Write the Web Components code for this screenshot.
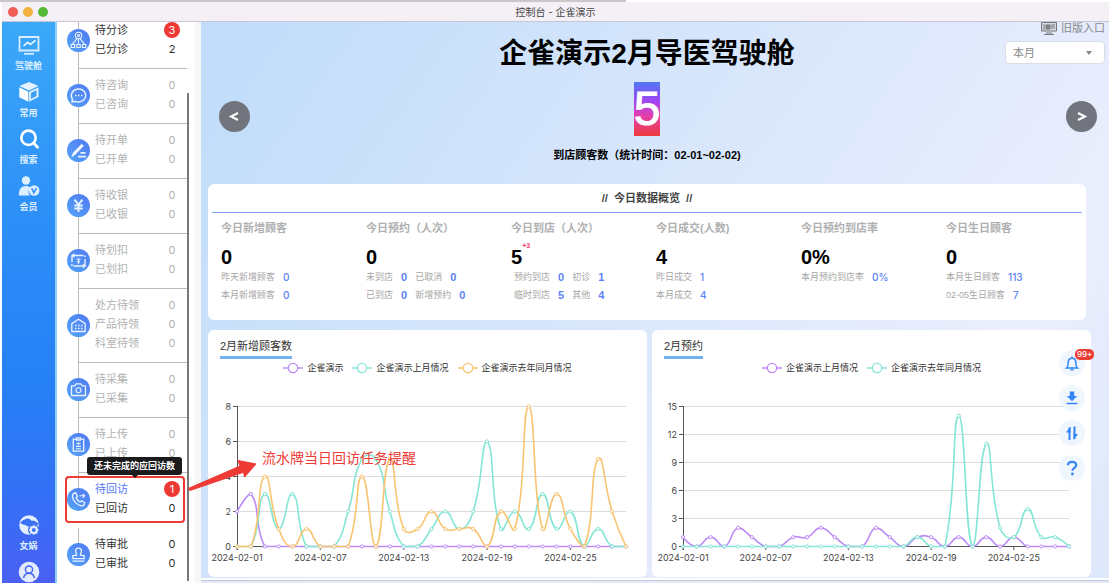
<!DOCTYPE html>
<html lang="zh-CN">
<head>
<meta charset="utf-8">
<title>控制台 - 企雀演示</title>
<style>
html,body{margin:0;height:100%;background:#fff}
body{font-family:"Liberation Sans","Noto Sans CJK SC",sans-serif;font-size:11px;line-height:16px;color:#333;overflow:hidden}
</style>
</head>
<body>
<cockpit-app></cockpit-app>
<script>
const define = (name, html, setup) => {
  const tpl = document.createElement('template');
  tpl.innerHTML = html;
  customElements.define(name, class extends HTMLElement {
    connectedCallback() {
      if (this.shadowRoot) return;
      this.attachShadow({mode: 'open'}).append(tpl.content.cloneNode(true));
      if (setup) setup(this, this.shadowRoot);
    }
  });
};

const RAIL_ICONS = {
  board: '<path d="M1.500 3h19v13.500h-19z" fill="none" stroke="#d8ecff" stroke-width="1.800"/><path d="M5.500 12l4-3.600 3 2 5-4" fill="none" stroke="#fff" stroke-width="1.500"/><path d="M6 19.800h10" stroke="#d8ecff" stroke-width="1.800"/>',
  cube: '<path d="M11 1l9.500 4-9.500 4.600L1.500 5z" fill="#e6f3ff"/><path d="M1.300 6.300l9 4.400v10L1.300 16.300z" fill="#fff"/><path d="M20.500 6.300l-9.400 4.400v10l9.400-4.600z" fill="#e0f0ff"/><path d="M13 11.800l5.500-2.600v5.800L13 18z" fill="#3f9df6"/>',
  search: '<circle cx="10.500" cy="9.800" r="7.200" fill="none" stroke="#fff" stroke-width="2.600"/><path d="M15.600 15l4 4.200" stroke="#fff" stroke-width="2.800" stroke-linecap="round"/>',
  member: '<circle cx="8" cy="5.500" r="4.200" fill="#dcefff"/><path d="M.8 20.500c0-6.500 2.600-9.600 7-9.600 2 0 3.600.6 4.700 1.800-2.500 2.300-2.600 5.400-.8 7.800z" fill="#dcefff"/><circle cx="16.200" cy="15.500" r="5.300" fill="#dcefff"/><path d="M13.800 13.200l2 4.600 2.600-4.600" fill="none" stroke="#2d8cf6" stroke-width="1.500"/>',
  globe: '<circle cx="11" cy="11" r="9.800" fill="#e4efff"/><path d="M5 6c2 .3 2.300-1.800 5-1.500s2.200 2.600 5 2.200 2.500 1.800 5.500 2.300l-1 2.500c-3-1.600-6-1-7.600 1.200-2.600.2-3-1.400-5-1.600S3.500 9.300 2 9" fill="#3a72f6"/><circle cx="15.800" cy="16" r="5.800" fill="#3a6ff6"/><circle cx="15.800" cy="16" r="2.900" fill="none" stroke="#e4efff" stroke-width="2.200"/><path d="M15.800 11.200v9.600M11 16h9.600M12.400 12.600l6.800 6.800M19.200 12.600l-6.800 6.800" stroke="#e4efff" stroke-width="1.500"/><circle cx="15.800" cy="16" r="1.900" fill="#3a6ff6"/>',
  user: '<circle cx="11" cy="11" r="10.300" fill="#e4ebff"/><circle cx="11" cy="8.500" r="3.600" fill="none" stroke="#4166f4" stroke-width="1.500"/><path d="M5.500 17c.8-3.200 2.800-4.700 5.500-4.700s4.700 1.500 5.500 4.700" fill="none" stroke="#4166f4" stroke-width="1.500"/>'
};

define('rail-item', `<style>
:host{display:block}
button{display:flex;flex-direction:column;align-items:center;gap:4px;width:100%;border:0;padding:0;background:none;color:#dceeff;font:700 9px/12px "Noto Sans CJK SC",sans-serif;cursor:pointer}
svg{display:block;width:22px;height:22px}
</style><button type="button"><svg viewBox="0 0 22 22" aria-hidden="true"></svg><slot></slot></button>`, (el, root) => {
  root.querySelector('svg').innerHTML = RAIL_ICONS[el.getAttribute('icon')];
  if (!el.textContent) root.querySelector('button').setAttribute('aria-label', '我的');
});

define('nav-rail', `<style>
:host{display:flex;flex-direction:column;justify-content:space-between;box-sizing:border-box;width:55px;padding-top:12px;background:linear-gradient(#3ba8f8,#2d8ff8 35%,#2680f6 65%,#3470f6 85%,#4a60f2);border-right:2px solid #90d2ff}
nav{display:flex;flex-direction:column;gap:9px}
</style>
<nav><rail-item icon="board">驾驶舱</rail-item><rail-item icon="cube">常用</rail-item><rail-item icon="search">搜索</rail-item><rail-item icon="member">会员</rail-item></nav>
<nav><rail-item icon="globe">女娲</rail-item><rail-item icon="user"></rail-item></nav>`);

const QUEUE_ICONS = {
  triage: '<circle cx="11.500" cy="6.500" r="3.200"/><circle cx="11.500" cy="6.500" r="1"/><path d="M11.500 9.800v5M10 9.600l-4.500 5.600M13 9.600l4.500 5.600M4.200 15.500h3.400v3H4.200zM9.800 15.500h3.400v3H9.800zM15.400 15.500h3.400v3h-3.400z"/>',
  chat: '<path d="M5 17.800l.5-2.600C2.500 10.500 5.800 5 11.700 5c4.300 0 7 3 7 6.400 0 3.600-3 6.600-7 6.600-1.500 0-2.500-.3-3.300-.6z" stroke-width="1.500"/><path d="M8 11.500h1.500M11 11.500h1.500M14 11.500h1.500" stroke-width="1.500"/>',
  pen: '<path d="M5.300 17.200l1-3 8.400-8.600 1.300 1.500-8.300 8.500z" fill="#fff"/><path d="M11 17.600h8M13.500 13.800h5" stroke-width="1.700"/>',
  yen: '<path d="M7.600 5.600l3.900 5 3.900-5M11.500 10.500v7.500M7.300 11.500h8.400M7.300 14.500h8.400" stroke-width="1.900"/>',
  deduct: '<path d="M5 13V6.500h11.500M18 10v7H6.500M5 15v2M18 8V6.500" stroke-width="1.400"/><path d="M7.500 4.800L5.200 6.500l2.300 1.700M15.800 15.200l2.400 1.700-2.400 1.800M11.500 9.500v5.500M9.500 10.200h4M10 12.600h3"/>',
  pharmacy: '<path d="M4.800 17.500V9.600l6.700-4.400 6.700 4.400v7.900zM8 11.500h1.500M11 11.500h1.500M14 11.500h1.500M8 14.500h1.500M11 14.500h1.500M14 14.500h1.500" stroke-width="1.300"/>',
  camera: '<path d="M4.500 7.800h3.300l1.400-2h4.600l1.400 2h3.300v9.700h-14z" stroke-width="1.300"/><circle cx="11.500" cy="12.200" r="2.500"/>',
  upload: '<path d="M6.300 6.200h10.400v12H6.300z" stroke-width="1.300"/><path d="M9.500 4.800h4v2.500h-4zM11.500 9v3M9.500 10.500h4M9 13.400h5M9 15.800h5"/>',
  call: '<path d="M6.500 5.600l2-1 2 3.600-1.400 1.500c.7 1.800 1.900 3.100 3.900 4.200l1.600-1.200 3.200 2.300-.9 2c-1 1.200-3 1.100-5.300-.2-3-1.700-5.200-4.500-6-7.500-.4-1.800 0-2.900.9-3.700z" stroke-width="1.300"/><path d="M12.500 7.800h5M15.700 5.800l2 2-2 2"/>',
  stamp: '<path d="M9.500 12.200c.4-1.800-.9-2.600-.9-4.200a2.900 2.900 0 0 1 5.800 0c0 1.600-1.300 2.400-.9 4.200l3.700.6v2.900H5.800v-2.900zM5.600 18.100h11.800" stroke-width="1.300"/>'
};

define('queue-item', `<style>
:host{display:flex;align-items:center;gap:5px;flex:none;position:relative;box-sizing:border-box;padding:7px 7px 9px 0;border-left:1px solid #bbb;border-bottom:1px solid #bbb;color:#b2b2b2}
:host([active]){color:#333}
:host([plain]){border-color:transparent;background:linear-gradient(#bbb 50%,transparent 50%) 0 0/1px 100% no-repeat border-box}
.ic{width:23px;height:23px;margin:1px 0 0 -12px;border-radius:50%;background:linear-gradient(45deg,#55a5f7,#5078f2);flex:none}
svg{display:block;width:23px;height:23px;fill:none;stroke:#eaf3ff;stroke-width:1.100}
.rows{flex:1}
.row{display:flex;justify-content:space-between;line-height:19px}
.n{width:16px;text-align:center;font-family:Inter,sans-serif}
.badge{height:16px;line-height:16px;margin-top:1px;border-radius:8px;background:#ee3833;color:#fff}
.hot{color:#5577f5}
</style><div class="ic"><svg viewBox="0 0 23 23" aria-hidden="true"></svg></div><div class="rows"></div><slot></slot>`, (el, root) => {
  root.querySelector('svg').innerHTML = QUEUE_ICONS[el.getAttribute('icon')];
  root.querySelector('.rows').innerHTML = el.getAttribute('rows').split(',').map((r, i) => {
    const [label, n, badge] = r.split(':');
    return `<div class="row"><span class="${el.hasAttribute('hot') && !i ? 'hot' : ''}">${label}</span><span class="n ${badge ? 'badge' : ''}">${n}</span></div>`;
  }).join('');
});

define('tip-bubble', `<style>
:host{position:absolute;left:8px;top:-16px;z-index:2;padding:0 7px;border-radius:3px;background:#1b1b1d;color:#fff;font:700 9px/18px "Noto Sans CJK SC",sans-serif;white-space:nowrap}
:host::after{content:"";position:absolute;left:50%;top:100%;margin-left:-3px;border:3px solid transparent;border-top-color:#1b1b1d;border-bottom:0}
</style><slot></slot>`);

define('queue-list', `<style>
:host{display:flex;flex-direction:column;box-sizing:border-box;width:144px;overflow:hidden;background:#fff;border-right:6px solid #f7f7f8;position:relative}
.list{display:flex;flex-direction:column;margin:-8px 8px 0 21px}
.bar{position:absolute;right:6px;top:71px;bottom:2px;width:2px;background:#777}
</style><div class="list">
<queue-item active icon="triage" rows="待分诊:3:b,已分诊:2"></queue-item>
<queue-item icon="chat" rows="待咨询:0,已咨询:0"></queue-item>
<queue-item icon="pen" rows="待开单:0,已开单:0"></queue-item>
<queue-item icon="yen" rows="待收银:0,已收银:0"></queue-item>
<queue-item icon="deduct" rows="待划扣:0,已划扣:0"></queue-item>
<queue-item icon="pharmacy" rows="处方待领:0,产品待领:0,科室待领:0"></queue-item>
<queue-item icon="camera" rows="待采集:0,已采集:0"></queue-item>
<queue-item icon="upload" rows="待上传:0,已上传:0"></queue-item>
<queue-item active hot plain icon="call" rows="待回访:1:b,已回访:0"><tip-bubble>还未完成的应回访数</tip-bubble></queue-item>
<queue-item active plain icon="stamp" rows="待审批:0,已审批:0"></queue-item>
</div><div class="bar"></div>`);

define('title-bar', `<style>
:host{display:flex;align-items:center;box-sizing:border-box;height:20px;padding:0 6px;background:#f5f0f6;border-bottom:1px solid #c6c6d6}
.dots{display:flex;gap:5px;flex:1}
i{width:10px;height:10px;border-radius:50%}
span{font:10px/16px Inter,"Noto Sans CJK SC",sans-serif;color:#444}
.end{flex:1}
</style><div class="dots"><i style="background:#ee5d56"></i><i style="background:#f3b13e"></i><i style="background:#56b938"></i></div><span><slot></slot></span><div class="end"></div>`);

define('metric-cell', `<style>
:host{display:block;padding:7px 0 16px 9px;white-space:nowrap;color:#a6a6a6}
h3{margin:0 0 10px;font-size:11px;line-height:16px;font-weight:700;color:#b0b0b0}
.v{display:flex;align-items:flex-start;font-size:20px;line-height:22px;font-weight:600;color:#000;font-family:"Liberation Sans",sans-serif}
sup{font-size:7px;line-height:8px;margin-top:-4px;color:#f0406c;font-weight:600}
.r{display:flex;gap:8px;font-size:9px;line-height:18px}
:host([indent]) .r{padding-left:3px}
b{font:500 10px/18px Inter,sans-serif;color:#5b83f6}
:host([pairs]) b{font:600 11px/18px "Liberation Sans",sans-serif}
</style><h3></h3><div class="v"></div>`, (el, root) => {
  root.querySelector('h3').textContent = el.getAttribute('label');
  const sup = el.getAttribute('delta');
  root.querySelector('.v').innerHTML = el.getAttribute('value') + (sup ? `<sup>${sup}</sup>` : '');
  for (const line of el.getAttribute('rows').split(';')) {
    const d = document.createElement('div');
    d.className = 'r';
    d.innerHTML = line.split(',').map(p => { const [a, b] = p.split(':'); return `<span>${a}</span><b>${b}</b>`; }).join('');
    root.append(d);
  }
});

define('overview-card', `<style>
:host{display:block;background:#fff;border-radius:6px;padding:0 4px}
h2{margin:0;text-align:center;font-size:11px;line-height:28px;font-weight:700;color:#444;border-bottom:1px solid #7ea2fa;white-space:pre}
.g{display:grid;grid-template-columns:repeat(6,1fr)}
</style><h2>//  今日数据概览  //</h2><div class="g">
<metric-cell label="今日新增顾客" value="0" rows="昨天新增顾客:0;本月新增顾客:0"></metric-cell>
<metric-cell pairs label="今日预约（人次）" value="0" rows="未到店:0,已取消:0;已到店:0,新增预约:0"></metric-cell>
<metric-cell pairs indent label="今日到店（人次）" value="5" delta="+3" rows="预约到店:0,初诊:1;临时到店:5,其他:4"></metric-cell>
<metric-cell label="今日成交(人数)" value="4" rows="昨日成交:1;本月成交:4"></metric-cell>
<metric-cell label="今日预约到店率" value="0%" rows="本月预约到店率:0%"></metric-cell>
<metric-cell label="今日生日顾客" value="0" rows="本月生日顾客:113;02-05生日顾客:7"></metric-cell>
</div>`);

/* Smoothed line; the control points stay inside the series' own bounding box. */
function smoothPath(pts) {
  const ys = pts.map(p => p[1]), lo = Math.min(...ys), hi = Math.max(...ys);
  const clamp = p => [p[0], Math.max(lo, Math.min(hi, p[1]))];
  let d = `M${pts[0]}`, cp0 = pts[0];
  for (let i = 1; i < pts.length; i++) {
    const p = pts[i], a = pts[i - 1], b = pts[i + 1] || p;
    const lp = Math.hypot(p[0] - a[0], p[1] - a[1]), ln = Math.hypot(b[0] - p[0], b[1] - p[1]);
    const r = pts[i + 1] ? ln / (ln + lp) : 1;
    const v = [b[0] - a[0], b[1] - a[1]];
    const cp1 = clamp([p[0] - v[0] * .5 * (1 - r), p[1] - v[1] * .5 * (1 - r)]);
    d += `C${clamp(cp0)} ${cp1} ${p}`;
    cp0 = [p[0] + v[0] * .5 * r, p[1] + v[1] * .5 * r];
  }
  return d;
}

define('line-chart', `<style>
:host{display:block;background:#fff;border-radius:6px;padding:8px 3px 7px;min-width:0}
h2{display:table;margin:0 0 3px 9px;padding-bottom:2px;border-bottom:3px solid #74aff2;font-size:11px;line-height:16px;font-weight:400}
.lg{display:flex;justify-content:center;gap:9px;font-size:9px;line-height:12px}
.lg span{display:flex;align-items:center;gap:4px}
.lg svg{width:20px;height:12px}
.plot{display:block;width:100%;height:auto}
text{font-family:Inter,sans-serif;font-size:9px;fill:#444}
</style><h2></h2><div class="lg"></div><svg class="plot" viewBox="0 0 433 196" role="img"></svg>`, (el, root) => {
  const cfg = JSON.parse(el.getAttribute('data')), [x0, x1] = cfg.x, y0 = 172, top = 32;
  root.querySelector('h2').textContent = el.getAttribute('label');
  root.querySelector('.plot').setAttribute('aria-label', el.getAttribute('label'));
  root.querySelector('.lg').innerHTML = cfg.series.map(s => `<span><svg viewBox="0 0 20 12"><path d="M0 6h20" stroke="${s.c}" stroke-width="1.500"/><circle cx="10" cy="6" r="4.700" fill="#fff" stroke="${s.c}" stroke-width="1.300"/></svg>${s.name}</span>`).join('');
  const Y = v => y0 - v * (y0 - top) / cfg.max, X = i => x0 + i * (x1 - x0) / 28;
  let s = '';
  for (let v = 0; v <= cfg.max; v += cfg.step) {
    const y = Math.round(Y(v)) + .5;
    if (v) s += `<path d="M${x0} ${y}H${x1}" stroke="#dcdcdc"/>`;
    s += `<path d="M${x0 - 4} ${y}H${x0}" stroke="#555"/><text x="${x0 - 6}" y="${y + 3}" text-anchor="end">${v}</text>`;
  }
  s += `<path d="M${x0 + .5} ${top}V${y0 + 4}M${x0} ${y0 + .5}H${x1}" stroke="#555" fill="none"/>`;
  for (let i = 0; i < 29; i += 6)
    s += `<path d="M${X(i)} ${y0}v4" stroke="#555"/><text x="${X(i)}" y="187" text-anchor="middle">2024-02-${String(i + 1).padStart(2, '0')}</text>`;
  for (const r of cfg.series) {
    const pts = r.d.map((v, i) => [X(i), Y(v) + .5]);
    s += `<path d="${smoothPath(pts)}" fill="none" stroke="${r.c}" stroke-width="1.600"/>`;
    s += pts.map(p => `<circle cx="${p[0]}" cy="${p[1]}" r="1.600" fill="#fff" stroke="${r.c}"/>`).join('');
  }
  root.querySelector('.plot').innerHTML = s;
});

define('float-tools', `<style>
:host{display:flex;flex-direction:column;gap:9px}
button{position:relative;width:26px;height:26px;border:0;border-radius:50%;padding:0;background:#eff6fe;cursor:pointer}
svg{display:block;width:26px;height:26px;fill:none;stroke:#3485f7}
b{position:absolute;left:16px;top:-1px;padding:0 2px;border-radius:5px;background:#ec3a35;color:#fff;font:500 8px/11px Inter,sans-serif}
</style>
<button type="button" aria-label="通知"><svg viewBox="0 0 26 26"><path d="M7.500 18h11c-1.400-1.200-1.700-3-1.700-5.500 0-2.600-1.500-4.300-3.800-4.300s-3.800 1.700-3.800 4.300c0 2.500-.3 4.300-1.700 5.500zM13 6.500v1.700M11.500 19.800h3" stroke-width="1.500"/></svg><b>99+</b></button>
<button type="button" aria-label="下载"><svg viewBox="0 0 26 26"><path d="M10.800 6.500h4.400v4.500h3L13 16.200 7.800 11h3z" fill="#3485f7" stroke="none"/><path d="M7.500 18.500h11" stroke-width="1.500"/></svg></button>
<button type="button" aria-label="切换"><svg viewBox="0 0 26 26"><path d="M10.500 20V7.500M15.500 6.500v12.500" stroke-width="2"/><path d="M11.500 6.500v6H7zM14.500 20v-6H19z" fill="#3485f7" stroke="none"/></svg></button>
<button type="button" aria-label="帮助"><svg viewBox="0 0 26 26"><path d="M9 10.300c0-4.600 8.300-4.600 8.300-.2 0 2.700-3.900 2.700-3.900 5.700" stroke-width="2.200"/><circle cx="13.400" cy="19" r="1.400" fill="#3485f7" stroke="none"/></svg></button>`);

define('hero-panel', `<style>
:host{display:block;position:relative;padding:12px 0 20px;text-align:center;color:#000}
h1{margin:0 0 8px;font-size:28px;line-height:40px;font-weight:700}
.big{display:table;margin:0 auto 10px;font-size:48px;line-height:54px;color:#fff;background:linear-gradient(#4c78f5,#a044f5 35%,#e23fae 62%,#ee3c3c);-webkit-text-stroke:1px #fff}
p{margin:0;font-weight:700;line-height:18px}
.nav{position:absolute;top:79px;width:31px;height:31px;border:0;border-radius:50%;padding:0;background:#71747d;cursor:pointer}
.nav svg{display:block;width:31px;height:31px;fill:none;stroke:#fff;stroke-width:2}
.prev{left:11px}.next{right:-11px}
</style><h1>企雀演示2月导医驾驶舱</h1><div class="big">5</div><p>到店顾客数（统计时间：02-01~02-02)</p>
<button class="nav prev" type="button" aria-label="上一个"><svg viewBox="0 0 31 31"><path d="M19 12l-7 3.500 7 3.500"/></svg></button>
<button class="nav next" type="button" aria-label="下一个"><svg viewBox="0 0 31 31"><path d="M12 12l7 3.500-7 3.500"/></svg></button>`);

define('period-tools', `<style>
:host{display:flex;flex-direction:column;align-items:flex-end;gap:6px}
a{display:flex;align-items:center;gap:4px;color:#888;text-decoration:none;line-height:14px;height:14px}
a svg{width:16px;height:13px}
label{display:flex;align-items:center;box-sizing:border-box;width:100px;height:23px;border:1px solid #d9dde6;border-radius:4px;background:#fff;position:relative}
select{appearance:none;width:100%;height:100%;border:0;background:none;padding:0 7px;margin:0;font:inherit;color:#888}
label svg{position:absolute;right:12px;width:6px;height:4px;pointer-events:none}
</style><a href="#"><svg viewBox="0 0 16 13"><path d="M.5.500h15v8.500H.5z" fill="#d5dae4" stroke="#777"/><path d="M3 2v6M5 3h4v4H5zM11 2v5M13 2v5" fill="#888" stroke="#777"/><path d="M5 11h6M3 12.500h10" stroke="#777"/></svg>旧版入口</a>
<label><select aria-label="统计周期"><option>本月</option></select><svg viewBox="0 0 6 4"><path d="M0 0h6L3 4z" fill="#888"/></svg></label>`);

const chartA = {x: [26, 415], max: 8, step: 2, series: [
  {name: '企雀演示', c: '#bd8bf8', d: [2,3].concat(Array(27).fill(0))},
  {name: '企雀演示上月情况', c: '#84e6d4', d: [0,0,3,1,3,0,0,0,2,5,5,2,0,0,1,2,1,2,6,1,2,1,3,1,2,0,1,0,0]},
  {name: '企雀演示去年同月情况', c: '#f9c470', d: [0,0,4,1,0,1,0,0,0,4,0,5,1,1,2,1,1,1,0,2,1,8,1,3,1,0,5,2,0]}]};
const chartB = {x: [28, 414], max: 15, step: 3, series: [
  {name: '企雀演示上月情况', c: '#bd8bf8', d: [1,0,1,0,2,1,0,0,1,1,2,1,0,0,2,1,0,1,1,0,1,0,1,0,1,0,0,0,0]},
  {name: '企雀演示去年同月情况', c: '#84e6d4', d: [0,0,0,0,0,0,0,0,0,0,0,0,0,0,0,0,0,1,0,0,14,0,11,2,1,4,1,1,0]}]};

define('dash-board', `<style>
:host{display:block;position:relative;box-sizing:border-box;flex:1;min-height:0;padding:0 23px 0 7px;overflow:hidden;background:linear-gradient(125deg,#bfdcfa,#d7e6fb 42%,#ebeefd 80%,#dde8fb)}
.charts{display:grid;grid-template-columns:1fr 1fr;gap:5px;margin:10px -5px 0 0}
period-tools{position:absolute;right:4px;top:-1px}
float-tools{position:absolute;right:24px;top:328px}
</style>
<hero-panel></hero-panel><overview-card></overview-card>
<div class="charts"><line-chart label="2月新增顾客数" data='${JSON.stringify(chartA)}'></line-chart><line-chart label="2月预约" data='${JSON.stringify(chartB)}'></line-chart></div>
<period-tools></period-tools><float-tools></float-tools>`);

define('callout-note', `<style>
:host{position:absolute;left:63px;top:454px;display:block;pointer-events:none}
.box{position:absolute;left:0;top:20px;width:116px;height:43px;border:2px solid #ee3a35;border-radius:4px}
svg{position:absolute;left:122px;top:0;width:72px;height:42px}
span{position:absolute;left:197px;top:-8px;font-size:14px;line-height:20px;color:#ee3a35;white-space:nowrap}
</style><div class="box"></div><svg viewBox="0 0 72 42"><path d="M1.800 32.300L53 10l-2.200-5.600L69 8 57.500 21.200l-1-4.900L2.800 34.600z" fill="#ee3a35" stroke="#ee3a35" stroke-linejoin="round"/></svg><span><slot></slot></span>`);

define('cockpit-app', `<style>
:host{display:flex;flex-direction:column;box-sizing:border-box;height:100vh;padding:0 6px 0 2px;background:linear-gradient(90deg,#c8c8c8 626px,#fff 626px) 0 0/100% 2px no-repeat}
.win{display:flex;flex-direction:column;flex:1;min-height:0;margin-top:2px;position:relative}
.body{display:flex;flex:1;min-height:0}
main{flex:1;min-width:0;display:flex;flex-direction:column}
.foot{height:2px;margin-top:2px;background:#e6eaf7;border-top:1px solid #c2cade}
</style><div class="win"><title-bar>控制台 - 企雀演示</title-bar>
<div class="body"><nav-rail></nav-rail><queue-list></queue-list><main><dash-board></dash-board><div class="foot"></div></main></div>
<callout-note>流水牌当日回访任务提醒</callout-note></div>`);
</script>
</body>
</html>
